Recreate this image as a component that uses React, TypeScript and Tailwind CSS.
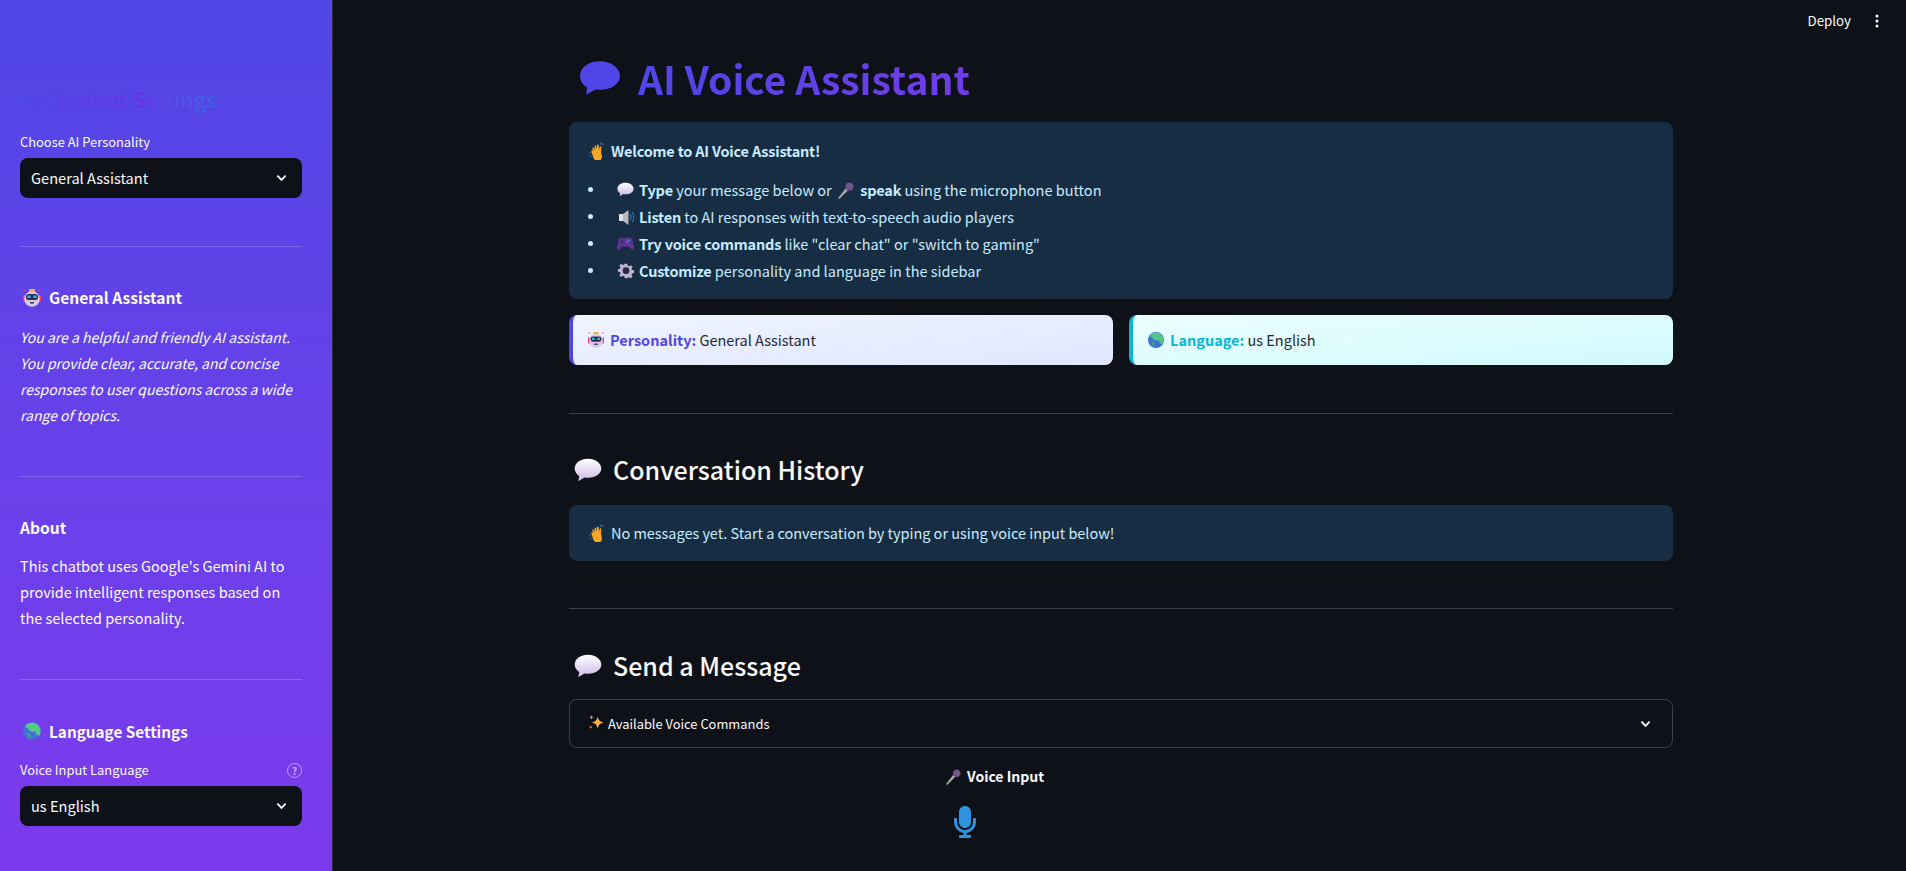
import React from "react"

function Bubble({ className = "" }: { className?: string }) {
  return (
    <svg viewBox="0 0 40 34" className={className}>
      <defs>
        <linearGradient id="bubble" x1="0" y1="0" x2="0" y2="1">
          <stop offset="0" stopColor="#ffffff" />
          <stop offset="1" stopColor="#cbb8e6" />
        </linearGradient>
      </defs>
      <path
        d="M20 1C9 1 1 7 1 15c0 4.500 2.500 8.300 6.500 10.800L6 33l9-5.300c1.600.3 3.300.4 5 .4 11 0 19-5.700 19-13.100S31 1 20 1z"
        fill="url(#bubble)"
      />
    </svg>
  )
}

function BubbleSolid({ className = "" }: { className?: string }) {
  return (
    <svg viewBox="0 0 40 34" className={className}>
      <path
        d="M20 1C9 1 1 7 1 15c0 4.500 2.500 8.300 6.500 10.800L7 33l9-5.300c1.300.3 2.700.4 4 .4 11 0 19-5.700 19-13.100S31 1 20 1z"
        fill="#5046e6"
      />
    </svg>
  )
}

function Hand({ className = "" }: { className?: string }) {
  return (
    <svg viewBox="0 0 16 18" className={className}>
      <path d="M0.500 12l2.500-2.500M1 15l1.500-1M11.500 0.500l.5 2.500M14 1l0 2" stroke="#2f80c8" strokeWidth="1" fill="none" />
      <path
        d="M4.500 9L3.200 6.500c-.4-1 1-1.500 1.500-.6L6.200 8 5.500 4.500c-.2-1.100 1.300-1.400 1.600-.3l1 3.600-.2-4.500c0-1.100 1.600-1.200 1.700 0l.5 4.500.6-3c.2-1 1.700-.8 1.600.3l-.2 5.400c.3 1.500.9 2.500.9 4.300 0 2.300-1.800 4-4 4-2.600 0-4.300-1.500-5-4L2.500 9.500c-.5-1.100 1-1.700 1.500-.8z"
        fill="#f9a825"
      />
    </svg>
  )
}

function Mic({ className = "" }: { className?: string }) {
  return (
    <svg viewBox="0 0 16 16" className={className}>
      <path d="M1 15l7.500-9.500 2 2L2 16z" fill="#a8a6ac" />
      <circle cx="11" cy="5" r="3.600" fill="#6b4a86" />
      <path d="M9 3.500l3.500 3.500M10.500 2l3.500 3.500" stroke="#8f8a99" strokeWidth=".7" />
    </svg>
  )
}

function Speaker({ className = "" }: { className?: string }) {
  return (
    <svg viewBox="0 0 16 16" className={className}>
      <path d="M1 5h4V12H1z" fill="#e3e3e6" />
      <path d="M5 5l5.500-4v15L5 12z" fill="#b8b8bd" />
      <path d="M12 5c1.300 1.500 1.300 4.500 0 6M14 3c2.300 2.800 2.300 7.200 0 10" stroke="#2f8fe0" strokeWidth="1" fill="none" />
    </svg>
  )
}

function Gamepad({ className = "" }: { className?: string }) {
  return (
    <svg viewBox="0 0 16 14" className={className}>
      <path
        d="M3.500 1.500h9c1 0 1.600.6 1.900 1.600L16 10.500c.3 1.900-1.800 3-3 1.500l-1.500-2h-7L3 12c-1.200 1.500-3.300.4-3-1.500l1.600-7.400c.3-1 .9-1.600 1.900-1.600z"
        fill="#5a3594"
      />
      <circle cx="5" cy="5" r="1.300" fill="#3b2a70" />
      <circle cx="11" cy="4" r=".8" fill="#38a8dc" />
      <circle cx="9.500" cy="5.500" r=".8" fill="#d8559f" />
    </svg>
  )
}

function Gear({ className = "" }: { className?: string }) {
  return (
    <svg viewBox="0 0 24 24" className={className}>
      <path
        d="M10 1h4l.6 3.200 1.900.8 2.700-1.800 2.800 2.800-1.800 2.700.8 1.900 3 .4v4l-3 .6-.8 1.900 1.800 2.700-2.800 2.800-2.700-1.800-1.900.8L14 23h-4l-.6-3-1.900-.8-2.700 1.800L2 18.200 3.800 15.500 3 13.600 0 13v-4l3-.4.8-1.900L2 4l2.800-2.800 2.700 1.800 1.900-.8z"
        fill="#c0b4d0"
      />
      <circle cx="12" cy="11.500" r="5" fill="#2c2a44" />
    </svg>
  )
}

function Robot({ className = "" }: { className?: string }) {
  return (
    <svg viewBox="0 0 18 18" className={className}>
      <path d="M0.500 1h2M15.500 1h2" stroke="#ef3f6b" strokeWidth="1" />
      <rect x="0" y="6" width="2" height="7" rx="1" fill="#ef3f6b" />
      <rect x="16" y="6" width="2" height="7" rx="1" fill="#ef3f6b" />
      <rect x="6" y="0" width="6" height="3" rx="1" fill="#f5b53d" />
      <circle cx="9" cy="10" r="7.800" fill="#d9c9e6" />
      <rect x="3" y="5" width="12" height="6" rx="2.500" fill="#2b2f52" />
      <rect x="4.500" y="6.500" width="3" height="2.500" fill="#33b5f0" />
      <rect x="10.500" y="6.500" width="3" height="2.500" fill="#33b5f0" />
      <rect x="7" y="13" width="4" height="1.500" fill="#3a3550" />
    </svg>
  )
}

function Globe({ className = "" }: { className?: string }) {
  return (
    <svg viewBox="0 0 18 18" className={className}>
      <circle cx="9" cy="9" r="9" fill="#3f70d6" />
      <path d="M5 1.500C9 0 15 1 17 6c1 3 .5 6-1 8l-3-2-1-3-3 1-3-2-2-3-2 1C2 4 3 2.500 5 1.500z" fill="#52c98a" />
      <path d="M4 11l3 .5 1 4-2 .5z" fill="#46a878" />
    </svg>
  )
}

function Sparkle({ className = "" }: { className?: string }) {
  return (
    <svg viewBox="0 0 14 14" className={className}>
      <path d="M8.500 1c.5 3 1.500 4.500 5 5.500-3.500 1-4.500 2.500-5 6-.5-3.500-1.500-5-5-6 3.500-1 4.500-2.500 5-5.500z" fill="#fbb040" />
      <path d="M3 0c.2 1.200.8 1.800 2 2-1.200.2-1.800.8-2 2-.2-1.200-.8-1.800-2-2 1.200-.2 1.800-.8 2-2z" fill="#f58a5b" />
      <path d="M2.500 9c.2 1 .6 1.400 1.500 1.500-.9.200-1.300.6-1.500 2-.2-1.400-.6-1.800-1.500-2 .9-.1 1.300-.5 1.500-1.500z" fill="#f4785b" />
    </svg>
  )
}

function Chevron() {
  return (
    <svg viewBox="0 0 12 8" className="h-[8px] w-[11px]">
      <path d="M1.500 1.500L6 6l4.500-4.500" stroke="#fafafa" strokeWidth="2" fill="none" />
    </svg>
  )
}

function SelectBox({ children }: { children: React.ReactNode }) {
  return (
    <div className="flex h-10 items-center justify-between rounded-lg bg-[#0e1117] pl-[11px] pr-[15px] text-[14.6px] text-[#fafafa]">
      <span>{children}</span>
      <Chevron />
    </div>
  )
}

function Sidebar() {
  return (
    <aside className="flex h-[871px] w-[333px] shrink-0 flex-col border-r border-[#2a2c3a] bg-gradient-to-b from-[#4f46e5] to-[#7c3aed] pl-5 pr-[30px] text-[#fafafa]">
      <h2 className="mt-[84px] h-[30px] w-[198px] whitespace-nowrap bg-gradient-to-r from-[#4f46e5] via-[#6a2fe8] via-60% to-[#3068e0] bg-clip-text text-[21.5px] font-medium leading-[30px] text-transparent">
        AI Chatbot Settings
      </h2>
      <label className="mt-[18px] h-[20px] text-[12.9px] leading-5">Choose AI Personality</label>
      <div className="mt-[6px]">
        <SelectBox>General Assistant</SelectBox>
      </div>
      <hr className="mt-[48px] border-white/20" />
      <h3 className="mt-[37px] flex h-7 items-center text-[15.6px] font-semibold">
        <Robot className="ml-[3px] mr-[8px] h-[18px] w-[18px]" />
        General Assistant
      </h3>
      <p className="mt-[12px] text-[14px] italic leading-[26px]">
        You are a helpful and friendly AI assistant. You provide clear, accurate, and concise responses to user questions across a wide range of topics.
      </p>
      <hr className="mt-[48px] border-white/20" />
      <h3 className="mt-[36px] h-7 text-[15.6px] font-semibold leading-7">About</h3>
      <p className="mt-[12px] text-[14.5px] leading-[26px]">
        This chatbot uses Google's Gemini AI to provide intelligent responses based on the selected personality.
      </p>
      <hr className="mt-[48px] border-white/20" />
      <h3 className="mt-[37px] flex h-7 items-center text-[15.3px] font-semibold">
        <Globe className="ml-[3px] mr-[8px] h-[18px] w-[18px]" />
        Language Settings
      </h3>
      <div className="mt-[15px] flex h-[20px] items-center justify-between text-[12.9px]">
        <label>Voice Input Language</label>
        <span className="flex h-[15px] w-[15px] items-center justify-center rounded-full border border-white/50 text-[10px] font-semibold text-white/60">?</span>
      </div>
      <div className="mt-[6px]">
        <SelectBox>us English</SelectBox>
      </div>
    </aside>
  )
}

function InfoBox({ children, className = "" }: { children: React.ReactNode; className?: string }) {
  return <div className={`rounded-lg bg-[#172d43] px-4 text-[14.5px] text-[#c7ebff] ${className}`}>{children}</div>
}

function Bullet({ icon, children }: { icon: React.ReactNode; children: React.ReactNode }) {
  return (
    <li className="flex h-[27px] items-center">
      <span className="ml-[3px] mr-[24px] h-[5px] w-[5px] rounded-full bg-[#c7ebff]" />
      <span className="mr-[5px] flex w-[17px] justify-center">{icon}</span>
      <span>{children}</span>
    </li>
  )
}

function Strong({ children }: { children: React.ReactNode }) {
  return <b className="font-semibold tracking-[-0.2px]">{children}</b>
}

function SectionTitle({ children }: { children: React.ReactNode }) {
  return (
    <h2 className="flex h-10 items-center text-[25px] font-medium text-[#fafafa]">
      <Bubble className="ml-[5px] mr-[11px] h-[24px] w-[28px]" />
      {children}
    </h2>
  )
}

function StatusCard({ tone, icon, label, value }: { tone: "personality" | "language"; icon: React.ReactNode; label: string; value: string }) {
  const toneClass =
    tone === "personality"
      ? "border-[#4f46e5] from-[#f0f4ff] to-[#e0e7ff]"
      : "border-[#06b6d4] from-[#ecfeff] to-[#cffafe]"
  return (
    <div className={`flex h-[50px] flex-1 items-center gap-[6px] rounded-lg border-l-4 bg-gradient-to-br pl-[15px] text-[14.5px] text-[#1f2937] ${toneClass}`}>
      {icon}
      <span>
        <b className={tone === "personality" ? "font-bold text-[#4f46e5]" : "font-bold text-[#06b6d4]"}>{label}</b> {value}
      </span>
    </div>
  )
}

export default function App() {
  return (
    <div className="flex h-[871px] overflow-hidden bg-[#0e1117] font-['Noto_Sans_CJK_SC','Noto_Sans',sans-serif]">
      <Sidebar />
      <main className="relative flex-1 pl-[236px]">
        <div className="absolute right-[27px] top-[11px] flex items-center text-[13.3px] text-[#fafafa]">
          <span className="mr-[24px]">Deploy</span>
          <svg viewBox="0 0 4 14" className="h-[14px] w-1" fill="#fafafa">
            <circle cx="2" cy="2" r="1.500" />
            <circle cx="2" cy="7" r="1.500" />
            <circle cx="2" cy="12" r="1.500" />
          </svg>
        </div>
        <div className="flex w-[1104px] flex-col">
          <h1 className="mt-[53px] flex h-[50px] items-center text-[39px] font-bold">
            <BubbleSolid className="ml-[10px] mr-[17px] h-[36px] w-[42px]" />
            <span className="bg-gradient-to-r from-[#4f46e5] to-[#6f3ce8] bg-clip-text text-transparent">AI Voice Assistant</span>
          </h1>
          <InfoBox className="mt-[19px] h-[177px] pt-4">
            <p className="flex h-[26px] items-center gap-[6px] font-semibold tracking-[-0.2px]">
              <Hand className="ml-1 h-[18px] w-[16px]" />
              Welcome to AI Voice Assistant!
            </p>
            <ul className="mt-[12px]">
              <Bullet icon={<Bubble className="h-[15px] w-[17px]" />}>
                <Strong>Type</Strong> your message below or <Mic className="mx-[2px] inline h-[18px] w-[18px] align-[-3px]" /> <Strong>speak</Strong> using the microphone button
              </Bullet>
              <Bullet icon={<Speaker className="h-[16px] w-[16px]" />}>
                <Strong>Listen</Strong> to AI responses with text-to-speech audio players
              </Bullet>
              <Bullet icon={<Gamepad className="h-[15px] w-[17px]" />}>
                <Strong>Try voice commands</Strong> like "clear chat" or "switch to gaming"
              </Bullet>
              <Bullet icon={<Gear className="h-[16px] w-[16px]" />}>
                <Strong>Customize</Strong> personality and language in the sidebar
              </Bullet>
            </ul>
          </InfoBox>
          <div className="mt-[16px] flex gap-4">
            <StatusCard tone="personality" icon={<Robot className="h-[16px] w-[16px]" />} label="Personality:" value="General Assistant" />
            <StatusCard tone="language" icon={<Globe className="h-[16px] w-[16px]" />} label="Language:" value="us English" />
          </div>
          <hr className="mt-[48px] border-white/20" />
          <div className="mt-[36px]">
            <SectionTitle>Conversation History</SectionTitle>
          </div>
          <InfoBox className="mt-[15px] flex h-14 items-center gap-[6px] tracking-[-0.03px]">
            <Hand className="ml-1 h-[18px] w-[16px]" />
            No messages yet. Start a conversation by typing or using voice input below!
          </InfoBox>
          <hr className="mt-[47px] border-white/20" />
          <div className="mt-[37px]">
            <SectionTitle>Send a Message</SectionTitle>
          </div>
          <div className="mt-[13px] flex h-[49px] items-center justify-between rounded-lg border border-white/20 pl-[18px] pr-[21px] text-[12.9px] text-[#fafafa]">
            <span className="flex items-center gap-[4px]">
              <Sparkle className="h-[16px] w-[16px]" />
              Available Voice Commands
            </span>
            <Chevron />
          </div>
          <div className="mt-[18px] flex h-5 items-center gap-[5px] pl-[376px] text-sm font-semibold text-[#fafafa]">
            <Mic className="h-[17px] w-[17px]" />
            Voice Input
          </div>
          <svg viewBox="0 0 352 512" className="ml-[385px] mt-[20px] h-8 w-[22px]" fill="#2f92dc">
            <path d="M176 352c53 0 96-43 96-96V96c0-53-43-96-96-96S80 43 80 96v160c0 53 43 96 96 96zm160-160h-16c-9 0-16 7-16 16v48c0 75-64 134-140 127-66-6-116-66-116-133v-42c0-9-7-16-16-16H16c-9 0-16 7-16 16v40c0 90 64 170 152 182v34H96c-9 0-16 7-16 16v16c0 9 7 16 16 16h160c9 0 16-7 16-16v-16c0-9-7-16-16-16h-56v-34c86-12 152-86 152-174v-48c0-9-7-16-16-16z" />
          </svg>
        </div>
      </main>
    </div>
  )
}
